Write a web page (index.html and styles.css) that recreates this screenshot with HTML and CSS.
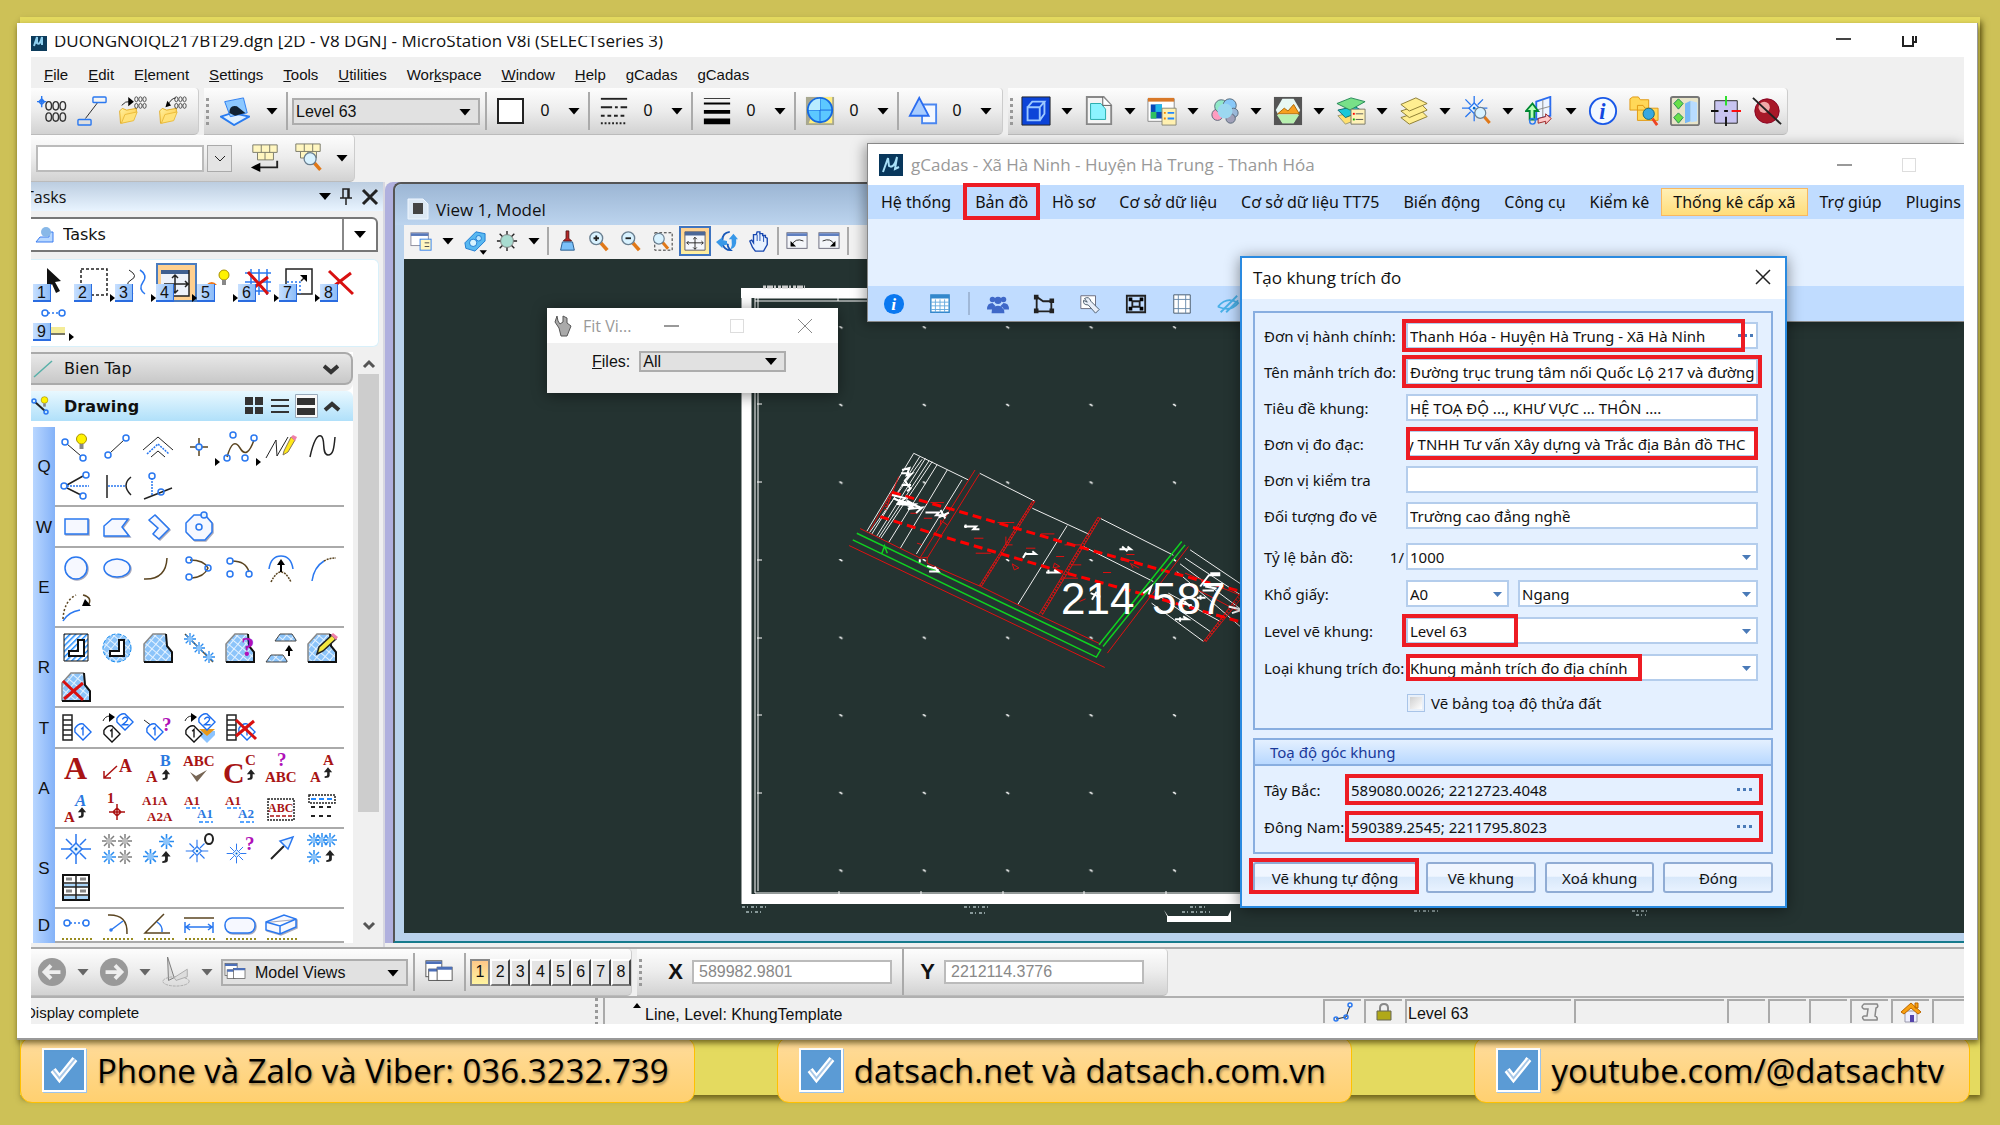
FILE: index.html
```html
<!DOCTYPE html>
<html lang="vi">
<head>
    <meta charset="UTF-8">
    <meta name="viewport" content="width=device-width, initial-scale=1.0">
    <title>gCadas - Tạo khung trích đo</title>
    <link rel="stylesheet" href="styles.css">
</head>
<body>
<svg class="defs" aria-hidden="true">
    <defs>
        <pattern id="hatch" width="6" height="6" patternUnits="userSpaceOnUse" patternTransform="rotate(40)"><rect width="6" height="6" fill="#8cc4fa"/><path d="M0 0H6M0 0V6" stroke="#e4f2ff" stroke-width="2"/></pattern>
        <pattern id="lines" width="4" height="4" patternUnits="userSpaceOnUse" patternTransform="rotate(45)"><rect width="4" height="4" fill="#fff"/><path d="M0 0V4" stroke="#1e8cff" stroke-width="3"/></pattern>
        <pattern id="ticks" x="-66" y="-88" width="83.4" height="77.6" patternUnits="userSpaceOnUse"><path d="M0 0l3 2" stroke="#fff" stroke-width="1.500" transform="translate(1 0)"/></pattern>
        <linearGradient id="fold" x1="0" y1="0" x2="1" y2="1"><stop offset="0" stop-color="#fff2a0"/><stop offset="1" stop-color="#ffc43a"/></linearGradient>
    </defs>
    <symbol id="burst" viewBox="0 0 32 32"><path class="b" d="M16 1v9M16 22v9M1 16h9M22 16h9M6 6l6 6M26 6l-6 6M6 26l6-6M26 26l-6-6"/><path class="b" fill="#bdf" d="M16 10l6 6-6 6-6-6z"/><circle cx="16" cy="16" r="1.500" fill="#06c"/></symbol>
    <symbol id="spark" viewBox="0 0 14 14"><path d="M7 0v14M0 7h14M2 2l10 10M12 2L2 12" stroke="#2a8cf0" stroke-width="1.500"/><circle cx="7" cy="7" r="3" fill="#8cc4fa"/></symbol>
    <symbol id="patch" viewBox="0 0 32 32"><path d="M2 30V12L11 2h13l2 12 4 6v10z" fill="url(#hatch)"/><path d="M2 30V12L11 2h13" fill="none" stroke="#888" stroke-width="1.500"/><path d="M24 2l1 12 5 6v10H2" fill="none" stroke="#111" stroke-width="2"/></symbol>
    <symbol id="hook" viewBox="0 0 12 14"><path d="M6 0l5 6H8v4q0 3-6 3v-2q3 0 3-2V6H1z" fill="#222"/></symbol>
    <symbol id="bulb" viewBox="0 0 12 18"><circle cx="6" cy="6" r="5" fill="#fff200" stroke="#a89000"/><path d="M4 11h4v5H4z" fill="#888"/></symbol>
    <symbol id="folder" viewBox="0 0 32 32"><path d="M3 16l3-3 5 2 11-2v4l-4 9-14 4z" fill="url(#fold)" stroke="#e0a81c"/><path d="M5 30l4-10 14-3-4 10z" fill="#ffe27a" stroke="#e8b838"/></symbol>
    <symbol id="beads" viewBox="0 0 16 16"><g fill="none" stroke="#333"><ellipse cx="3" cy="4" rx="2" ry="3"/><ellipse cx="8" cy="4" rx="2" ry="3"/><ellipse cx="13" cy="4" rx="2" ry="3"/><ellipse cx="3" cy="12" rx="2" ry="3"/><ellipse cx="8" cy="12" rx="2" ry="3"/><ellipse cx="13" cy="12" rx="2" ry="3"/></g></symbol>
    <symbol id="lens" viewBox="0 0 24 24"><path d="M14 14l7 8" stroke="#e07818" stroke-width="4"/><circle cx="9" cy="9" r="7" fill="#d8f2ff" stroke="#6a7f90" stroke-width="1.500"/></symbol>
    <symbol id="tagone" viewBox="0 0 20 20"><path d="M1 6q4-6 9-5l9 9-9 9-9-9z" fill="#fff" stroke="currentColor" stroke-width="1.500"/><path d="M8 7l2-2v9" fill="none" stroke="currentColor" stroke-width="1.500"/></symbol>
    <symbol id="tagtwo" viewBox="0 0 20 20"><path d="M1 6q4-6 9-5l9 9-9 9-9-9z" fill="#fff" stroke="currentColor" stroke-width="1.500"/><path d="M7 7q3-4 6-1 0 3-6 7h7" fill="none" stroke="currentColor" stroke-width="1.500"/></symbol>
    <symbol id="wins" viewBox="0 0 32 28"><rect x="2" y="2" width="17" height="17" fill="#fff" stroke="#555"/><path d="M2 4h17" stroke="#4c6fb8" stroke-width="3"/><rect x="5" y="11" width="11" height="12" fill="#fff" stroke="#555"/><path d="M5 12h11" stroke="#4c6fb8" stroke-width="3"/><rect x="14" y="9" width="16" height="14" fill="#fff" stroke="#555"/><path d="M14 10h16" stroke="#4c6fb8" stroke-width="3"/></symbol>
    <symbol id="minview" viewBox="0 0 24 20"><rect x="1" y="1" width="22" height="17" fill="#f4f6fa" stroke="#667"/><path d="M1 3h22" stroke="#5f7fc0" stroke-width="3"/></symbol>
</svg>

<div class="band">
    <main class="frame">
        <div class="screen">
            <header class="titlebar">
                <svg width="16" height="18" viewBox="0 0 16 18"><path fill="#0d3c5c" d="M0 0h16v18H0z"/><path d="M3 13l3-9v6q3 3 5-6v8" fill="none" stroke="#8fd0f0" stroke-width="2"/></svg>
                <span>DUONGNOIQL217BT29.dgn [2D - V8 DGN] - MicroStation V8i (SELECTseries 3)</span>
                <div class="winbtns"><i class="min"></i><svg width="18" height="18" viewBox="0 0 18 18" class="k"><path d="M2 5h10v11H2zM5 5V2h10v10h-3" stroke-width="2"/></svg></div>
            </header>
            <nav class="menubar">
                <a href="#"><u>F</u>ile</a><a href="#"><u>E</u>dit</a><a href="#">E<u>l</u>ement</a><a href="#"><u>S</u>ettings</a><a href="#"><u>T</u>ools</a><a href="#"><u>U</u>tilities</a><a href="#">Wor<u>k</u>space</a><a href="#"><u>W</u>indow</a><a href="#"><u>H</u>elp</a><a href="#">gCadas</a><a href="#">gCadas</a>
            </nav>

            <div class="toolbars">
                <div class="group files">
                    <svg class="ic" viewBox="0 0 32 32"><path class="b" d="M5 0v12M0 6h10M5 3l3 3-3 3-3-3z"/><use href="#beads" x="8" y="3" width="24" height="27"/></svg>
                    <svg class="ic" viewBox="0 0 32 32"><path class="k" d="M9 24L22 7"/><rect class="b" x="17" y="1" width="14" height="6" rx="1" stroke-width="2"/><rect class="b" x="1" y="25" width="14" height="6" rx="1" stroke-width="2"/></svg>
                    <svg class="ic" viewBox="0 0 32 32"><use href="#folder" width="30" height="32"/><use href="#beads" x="18" y="0" width="14" height="14"/><path class="k" d="M5 10q4-5 9-4"/><path d="M12 1l6 5-6 5z"/></svg>
                    <svg class="ic" viewBox="0 0 32 32"><use href="#folder" width="30" height="32"/><use href="#beads" x="18" y="0" width="14" height="14"/><path class="k" d="M12 10q2-7 8-8"/><path d="M9 12l2-7 4 5z"/></svg>
                </div>
                <div class="group attrs">
                    <i class="grip"></i>
                    <svg class="ic" viewBox="0 0 32 32"><path d="M1 22l12-4 18 4-16 9z" fill="#dff0ff" stroke="#2a7cf0" stroke-width="2"/><path d="M5 6l20-4 4 16-18 4z" fill="#8cc8ff" stroke="#2a7cf0"/><path d="M10 18q0-9 8-7l9 7-11 3z" fill="#123"/></svg>
                    <i class="caret"></i>
                    <div class="cell first">
                        <div class="pick grey"><select aria-label="Level"><option>Level 63</option></select></div>
                    </div>
                    <div class="cell"><i class="swatch"></i><b>0</b><i class="caret"></i></div>
                    <div class="cell"><svg class="ic" viewBox="0 0 32 32"><path class="k" d="M2 3h28" stroke-width="2"/><path class="k" d="M2 12h28" stroke-width="2" stroke-dasharray="12 3 3 3"/><path class="k" d="M2 21h28" stroke-width="2" stroke-dasharray="4 3"/><path class="k" d="M2 29h28" stroke-width="2" stroke-dasharray="2 2"/></svg><b>0</b><i class="caret"></i></div>
                    <div class="cell"><svg class="ic" viewBox="0 0 32 32"><path d="M2 2h28v1H2zM2 7h28v2H2zM2 15h28v4H2zM2 24h28v6H2z"/></svg><b>0</b><i class="caret"></i></div>
                    <div class="cell"><svg class="ic" viewBox="0 0 32 32"><path fill="#a8a890" d="M1 1h30v30H1z"/><path fill="#ffee80" d="M14 1h15v28H4z"/><circle cx="16" cy="15" r="13" fill="#5cc8ff" stroke="#1668e0" stroke-width="2"/><path d="M16 2v26M3 15h26" stroke="#1668e0"/><path d="M16 3a12 12 0 0 0-12 12h12z" fill="#b8ecff"/></svg><b>0</b><i class="caret"></i></div>
                    <div class="cell"><svg class="ic" viewBox="0 0 32 32"><path d="M15 9h15v20H15z" fill="#f4f8ff" stroke="#4a86f0" stroke-width="2"/><path d="M12 2l10 19H2z" fill="#a8ccff" stroke="#2a6cf0" stroke-width="2"/></svg><b>0</b><i class="caret"></i></div>
                </div>
                <div class="group prim">
                    <i class="grip"></i>
                    <svg class="ic" viewBox="0 0 32 32"><path fill="#0c44d8" stroke="#222" d="M1 1h30v30H1z"/><path d="M7 12h13v14H7zM7 12l5-6h13l-5 6M25 6v13l-5 7" fill="none" stroke="#9cc8ff" stroke-width="2"/></svg><i class="caret"></i>
                    <svg class="ic" viewBox="0 0 32 32"><path d="M3 1h18l8 9v20H3z" fill="#f4f4f4" stroke="#888" stroke-width="2"/><path d="M7 8h11l5 6v11H7z" fill="#8cf4ff" stroke="#2aa"/><path d="M20 1v9h9" fill="#fff" stroke="#555"/></svg><i class="caret"></i>
                    <svg class="ic" viewBox="0 0 32 32"><path fill="#fff" stroke="#888" d="M1 3h28v24H1z"/><path fill="#d87828" d="M1 2h28v4H1z"/><path fill="#0848b8" d="M4 9h12v15H4z"/><path fill="#20b8e8" d="M9 9h7v8H9z"/><path fill="#30c060" d="M4 17h6v7H4z"/><path fill="#fff0b0" stroke="#887" d="M16 13h15v18H16z"/><path d="M22 18h7M22 24h7" stroke="#28f" stroke-width="2"/><path d="M18 18h2M18 24h2" stroke="#e80" stroke-width="2"/></svg><i class="caret"></i>
                    <svg class="ic" viewBox="0 0 32 32"><g stroke="#567"><circle cx="8" cy="20" r="6" fill="#ff9cc0"/><circle cx="12" cy="11" r="7" fill="#90e8c8"/><circle cx="21" cy="10" r="7" fill="#88c8f8"/><circle cx="25" cy="18" r="5" fill="#9ab8d8"/><circle cx="22" cy="24" r="5" fill="#a0a0b8"/></g><circle cx="16" cy="16" r="8" fill="#9cd8f0"/></svg><i class="caret"></i>
                    <svg class="ic" viewBox="0 0 32 32"><path fill="#555" d="M1 1h30v30H1z"/><path fill="#e8f8f4" d="M10 3h12l7 12-7 14H10L3 15z"/><path fill="#f8a020" stroke="#a60" d="M5 19l7-6 4 3 6-7 6 10z"/><path fill="#b8f0b0" d="M4 20h24l-6 9H10z"/></svg><i class="caret"></i>
                    <svg class="ic" viewBox="0 0 32 32"><path fill="#ffe070" stroke="#997" d="M2 21l8 9 18-7-8-6z"/><path fill="#18c8d8" stroke="#166" d="M2 15l8 8 18-7-8-5z"/><path fill="#78e088" stroke="#285" d="M1 8l15-6 15 4-16 9z"/><path fill="#fff2b8" stroke="#776" d="M16 14h15v16H16z"/><path d="M21 19h8M21 25h8" stroke="#555"/><path d="M18 19h2" stroke="red" stroke-width="2"/><path d="M18 25h2" stroke="#0a0" stroke-width="2"/></svg><i class="caret"></i>
                    <svg class="ic" viewBox="0 0 32 32"><g fill="#ffee90" stroke="#8a7a30"><path d="M2 23l9 7 19-8-6-6z"/><path d="M2 16l9 7 19-8-6-6z"/><path d="M2 9l9 7 19-8-12-6z"/></g></svg><i class="caret"></i>
                    <svg class="ic" viewBox="0 0 32 32"><use href="#burst" x="-2" y="-2" width="30" height="30"/><use href="#lens" x="12" y="9" width="20" height="23"/></svg><i class="caret"></i>
                    <svg class="ic" viewBox="0 0 32 32"><path fill="#eef4ff" stroke="#2a6cf0" stroke-width="2" d="M12 6l15-5v20l-15 4z"/><path stroke="#888" d="M19 4v20M12 15l15-4"/><path fill="#b8ffb8" stroke="#083" stroke-width="2" d="M8 8l6 8h-4v9H5v-9H1z"/><path fill="#ffc8c8" stroke="#922" d="M14 24l8-2v-3l6 5-6 6v-3l-8 2z"/><circle class="b" cx="8" cy="27" r="3"/></svg><i class="caret"></i>
                    <svg class="ic" viewBox="0 0 32 32"><circle cx="16" cy="16" r="14" fill="#f4faff" stroke="#1858e8" stroke-width="2"/><text x="12" y="24" class="infoi">i</text></svg>
                    <svg class="ic" viewBox="0 0 32 32"><path fill="#ffd858" stroke="#e09810" d="M1 3l3-2h6l2 3h9v11H1zM9 10h6l2 3h14v13H9z"/><circle cx="21" cy="19" r="6" fill="#38a8e0" stroke="#167"/><path d="M25 24l5 7" stroke="#e42" stroke-width="3"/></svg>
                    <svg class="ic" viewBox="0 0 32 32"><rect x="1" y="1" width="30" height="30" rx="2" fill="#e8e4c8" stroke="#777" stroke-width="2"/><path fill="#68e048" stroke="#285" d="M9 3l5 5-5 6-5-6zM9 18l5 5-5 6-5-6z"/><path fill="#78b8f8" d="M16 8l6-3v22l-6 2z"/><path fill="#b8dcff" d="M22 5l7 2v20l-7 1z"/></svg>
                    <svg class="ic" viewBox="0 0 32 32"><path fill="#c8c4f0" stroke="#222" d="M4 5h24v24H4z"/><path d="M16 0v10" stroke="#2d2" stroke-width="2"/><path d="M22 16h10" stroke="red" stroke-width="2"/><path d="M16 22v10M0 16h8M14 16h4" stroke="#111" stroke-width="2"/></svg>
                    <svg class="ic" viewBox="0 0 32 32"><circle cx="16" cy="16" r="13" fill="#a81828" stroke="#802"/><circle cx="13" cy="12" r="6" fill="#f0a8a8"/><path class="k" d="M1 2l30 28" stroke-width="2"/></svg>
                </div>
            </div>
            <div class="toolbars">
                <div class="group keyin">
                    <input type="text" aria-label="Key-in"><button class="drop" aria-label="History"><svg width="12" height="8" viewBox="0 0 12 8" class="k"><path d="M1 1l5 5 5-5"/></svg></button>
                    <svg class="ic" viewBox="0 0 32 32"><path fill="#fff6c0" stroke="#776" d="M3 2h26v8h-4v8H8v-8H3zM12 2v8M21 2v8M16 10v8M8 10h17"/><path class="k" d="M29 19v7H10" stroke-width="2"/><path d="M1 26l10-5v10z"/></svg>
                    <svg class="ic" viewBox="0 0 32 32"><path fill="#fff6c0" stroke="#776" d="M3 1h26v8h-4v7H8V9H3zM12 1v8M21 1v8M16 9v7M8 9h17"/><use href="#lens" x="10" y="7" width="22" height="25"/></svg>
                    <i class="caret"></i>
                </div>
            </div>

            <div class="work">
                <aside class="tasks">
                    <div class="taskhead"><span>Tasks</span><i class="caret"></i>
                        <svg width="12" height="18" viewBox="0 0 12 18" class="k"><path d="M3 1h6v9H3zM8 1v9M0 10h12M6 10v7" stroke-width="1.500"/></svg>
                        <svg width="18" height="18" viewBox="0 0 18 18" class="k"><path d="M2 2l14 14M16 2L2 16" stroke-width="3"/></svg>
                    </div>
                    <div class="taskpick"><svg width="20" height="18" viewBox="0 0 20 18"><path d="M1 16l4-5h9V6h4v10z" fill="#b8d8ff" stroke="#3a7cf0"/><circle cx="11" cy="6" r="5" fill="#88b8e8"/></svg><select aria-label="Task"><option>Tasks</option></select><i class="caret"></i></div>
                    <div class="mainbox">
                        <button><svg viewBox="0 0 32 32"><path d="M13 0l14 13-6 1 5 9-4 2-4-9-5 5z" fill="#111"/></svg><kbd>1</kbd></button>
                        <button class="more"><svg viewBox="0 0 32 32"><path class="k" d="M6 1h26v26H6z" stroke-dasharray="3 2" stroke-width="1.500"/></svg><kbd>2</kbd></button>
                        <button class="more"><svg viewBox="0 0 32 32"><path class="k" d="M13 2q10 6 2 10t2 14"/><path class="b" d="M24 2q8 5 3 12t2 12" stroke-width="1.500"/></svg><kbd>3</kbd></button>
                        <button class="more on"><svg viewBox="0 0 32 32"><path fill="#eef2fa" d="M4 2h28v26H4z"/><path fill="#3f5f90" d="M4 2h28v4H4z"/><path class="k" d="M18 7v18M7 16h24M15 10l3-3 3 3M28 13l3 3-3 3M15 22l3 3 3-3M32 2v26H4" stroke-width="1.500"/></svg><kbd>4</kbd></button>
                        <button class="more"><svg viewBox="0 0 32 32"><path fill="#f07818" d="M8 17q6-6 11 0z"/><use href="#bulb" x="20" y="0" width="12" height="20"/></svg><kbd>5</kbd></button>
                        <button class="more"><svg viewBox="0 0 32 32"><path class="b" d="M12 1v26M20 1v26M28 1v26M6 5h26M6 14h26M6 23h26" stroke-width="1.500"/><path class="r" d="M9 4l20 22M29 9L9 24" stroke-width="3"/></svg><kbd>6</kbd></button>
                        <button class="more"><svg viewBox="0 0 32 32"><path class="k" d="M6 1h26v25H6zM21 13l5-5" stroke-width="1.500"/><path d="M20 7h7v7z"/><path class="b" d="M7 14h13v12" stroke-dasharray="2 2"/></svg><kbd>7</kbd></button>
                        <button><svg viewBox="0 0 32 32"><path class="r" d="M8 3l24 23M30 5L13 18" stroke-width="3"/></svg><kbd>8</kbd></button>
                        <button class="more"><svg viewBox="0 0 32 32"><circle class="b" cx="11" cy="6" r="3"/><circle class="b" cx="28" cy="6" r="3"/><path class="b" d="M14 6h12" stroke-dasharray="2 2"/><path d="M17 20h14v6H17z" fill="#f4ec98"/><path d="M17 27h14" stroke="#776" stroke-width="2"/></svg><kbd>9</kbd></button>
                    </div>
                    <div class="scroller">
                        <div class="list">
                            <div class="sec closed"><svg width="22" height="20" viewBox="0 0 22 20"><path d="M3 18L21 2" stroke="#58b0a8" stroke-width="1.500"/></svg><span>Bien Tap</span><svg width="16" height="12" viewBox="0 0 16 12"><path d="M1 3l7 6 7-6" fill="none" stroke="#333" stroke-width="4"/></svg></div>
                            <div class="sec open"><svg width="22" height="20" viewBox="0 0 22 20"><path class="k" d="M4 6l10 9" stroke-width="2"/><circle class="b" cx="3" cy="5" r="2"/><circle class="b" cx="15" cy="16" r="2"/><use href="#bulb" x="9" y="0" width="9" height="12"/></svg><span>Drawing</span>
                                <svg width="96" height="24" viewBox="0 0 96 24" fill="#333"><path d="M0 3h8v8H0zM10 3h8v8h-8zM0 13h8v7H0zM10 13h8v7h-8zM26 5h18v2H26zM26 11h18v2H26zM26 17h18v2H26z"/><path fill="#f8f8f8" stroke="#9ab" d="M50.500.5h22v23h-22z"/><path d="M52 4h18v7H52zM52 14h18v7H52z"/><path d="M80 16l7-6 7 6" fill="none" stroke="#333" stroke-width="4"/></svg></div>
                            <div class="row"><kbd>Q</kbd><div class="icons">
                                <svg viewBox="0 0 32 32"><path class="k" d="M7 13l14 12"/><circle class="b" cx="5" cy="11" r="3"/><circle class="b" cx="23" cy="27" r="3"/><use href="#bulb" x="15" y="2" width="13" height="18"/></svg>
                                <svg viewBox="0 0 32 32"><path class="k" d="M9 22L23 9"/><circle class="b" cx="7" cy="24" r="3"/><circle class="b" cx="25" cy="7" r="3"/></svg>
                                <svg viewBox="0 0 32 32"><path class="k" d="M1 19L16 6l15 13M9 26l7-6 7 6"/><path class="b" d="M5 23l11-10 11 10" stroke-dasharray="2 1"/></svg>
                                <svg viewBox="0 0 32 32"><path class="n" d="M16 7v18M7 16h18"/><circle class="b" fill="#fff" cx="16" cy="16" r="3"/><path d="M32 27l5 4-5 4z"/></svg>
                                <svg viewBox="0 0 32 32"><path class="n" d="M3 26Q9 5 16 17t14-8"/><circle class="b" cx="3" cy="27" r="3"/><circle class="b" cx="9" cy="4" r="3"/><circle class="b" cx="21" cy="27" r="3"/><circle class="b" cx="30" cy="7" r="3"/><path d="M32 27l5 4-5 4z"/></svg>
                                <svg viewBox="0 0 32 32"><path class="k" d="M1 27L11 9l1 16L23 6"/><path d="M19 20l7-14 4 3-7 12-5 3z" fill="#ffe818" stroke="#875"/><path d="M26 6l2-2 4 2-2 4z" fill="#f080a8"/></svg>
                                <svg viewBox="0 0 32 32"><path class="k" d="M4 26Q9 3 15 5c5 2 0 18 7 19 5 0 6-6 7-18" stroke-width="1.500"/></svg>
                                <svg viewBox="0 0 32 32"><path class="k" d="M7 15L23 6M7 18l14 7" stroke-width="1.500"/><path class="b" d="M7 16h22" stroke-dasharray="2 1"/><circle class="b" cx="4" cy="16" r="3"/><circle class="b" cx="26" cy="5" r="3"/><circle class="b" cx="23" cy="26" r="3"/></svg>
                                <svg viewBox="0 0 32 32"><path class="k" d="M6 5v23M30 7q-10 8 0 18" stroke-width="1.500"/><path class="b" d="M7 16h18" stroke-dasharray="2 1"/></svg>
                                <svg viewBox="0 0 32 32"><path class="k" d="M2 29l28-11" stroke-width="1.500"/><path class="b" d="M10 8v17" stroke-dasharray="2 1"/><circle class="b" cx="10" cy="6" r="3"/><circle class="b" cx="19" cy="22" r="3"/></svg>
                            </div></div>
                            <div class="row"><kbd>W</kbd><div class="icons">
                                <svg viewBox="0 0 32 32"><path class="b s" d="M5 8h23v15H5z"/></svg>
                                <svg viewBox="0 0 32 32"><path class="b s" d="M3 25V15l8-7h16l-6 8 7 9z"/></svg>
                                <svg viewBox="0 0 32 32"><path class="b s" d="M7 9l6-5 14 14-10 10-6-5 5-6z"/></svg>
                                <svg viewBox="0 0 32 32"><path class="b s" d="M11 4h11l7 8v9l-7 8H11l-8-8v-9z"/><circle class="b" cx="16" cy="16" r="3"/><circle class="b" fill="#fff" cx="21" cy="4" r="3"/></svg>
                            </div></div>
                            <div class="row"><kbd>E</kbd><div class="icons">
                                <svg viewBox="0 0 32 32"><circle class="b s" cx="16" cy="16" r="11"/></svg>
                                <svg viewBox="0 0 32 32"><ellipse class="b s" cx="16" cy="16" rx="13" ry="9"/></svg>
                                <svg viewBox="0 0 32 32"><path class="n" d="M2 27Q24 28 25 6"/></svg>
                                <svg viewBox="0 0 32 32"><path class="n" d="M7 8q14 0 18 8-4 9-16 10"/><circle class="b" cx="6" cy="8" r="3"/><circle class="b" cx="25" cy="16" r="3"/><circle class="b" cx="6" cy="25" r="3"/></svg>
                                <svg viewBox="0 0 32 32"><path class="n" d="M8 9q14 0 17 11"/><circle class="b" cx="6" cy="9" r="3"/><circle class="b" cx="25" cy="22" r="3"/><circle class="b" cx="6" cy="22" r="3"/></svg>
                                <svg viewBox="0 0 32 32"><path class="b" d="M4 17Q6 4 16 4t12 13" stroke-width="1.500"/><path class="n" d="M6 30q10-20 20 0" stroke-dasharray="2 1"/><path d="M16 7l4 6h-3v7h-2v-7h-3z"/></svg>
                                <svg viewBox="0 0 32 32"><path class="b" d="M6 29q2-14 12-20" stroke-width="1.500"/><path class="n" d="M18 9q5-3 12-3" stroke-dasharray="2 1"/></svg>
                                <svg viewBox="0 0 32 32"><path class="n" d="M3 28Q4 10 16 4" stroke-dasharray="2 2"/><path class="b" d="M3 30q5-9 17-11" stroke-width="1.500"/><path class="n" d="M23 4q9 2 6 9" stroke-width="2"/><path d="M22 15l3-7 6 7z"/></svg>
                            </div></div>
                            <div class="row"><kbd>R</kbd><div class="icons">
                                <svg viewBox="0 0 32 32"><path fill="url(#lines)" stroke="#111" d="M4 2h24v27H4z"/><path fill="#fff" stroke="#111" stroke-width="2" d="M18 8h6v16H9v-5h9z"/></svg>
                                <svg viewBox="0 0 32 32"><circle cx="16" cy="16" r="14" fill="url(#hatch)" stroke="#18e" stroke-dasharray="4 2"/><path fill="#fff" stroke="#111" stroke-width="2" d="M18 8h5v16H9v-5h9z"/></svg>
                                <svg viewBox="0 0 32 32"><use href="#patch"/></svg>
                                <svg viewBox="0 0 32 32"><path class="n" d="M2 2l28 28"/><use href="#spark" x="1" y="1" width="12" height="12"/><use href="#spark" x="10" y="10" width="12" height="12"/><use href="#spark" x="20" y="19" width="12" height="12"/></svg>
                                <svg viewBox="0 0 32 32"><use href="#patch"/><text x="17" y="24" class="q big">?</text></svg>
                                <svg viewBox="0 0 32 32"><path fill="url(#hatch)" stroke="#444" d="M10 9l5-7h12l4 6v1zM1 30l5-7h12l4 6v1z"/><path d="M24 13l4 6h-3v5h-2v-5h-3z"/></svg>
                                <svg viewBox="0 0 32 32"><use href="#patch"/><path d="M11 22l2-7L26 3l4 4-13 12z" fill="#f4e840" stroke="#222" stroke-width="1.500"/><path d="M25 3l2-2 5 4-2 3z" fill="#f080a8"/></svg>
                                <svg viewBox="0 0 32 32"><use href="#patch"/><path class="r" d="M3 10l20 19M23 12L4 28" stroke-width="3"/></svg>
                            </div></div>
                            <div class="row"><kbd>T</kbd><div class="icons">
                                <svg viewBox="0 0 32 32" class="cb"><path class="k" d="M3 3h9v25H3zM3 8h9M3 13h9M3 18h9M3 23h9" stroke-width="1.500"/><use href="#tagone" x="14" y="11" width="18" height="18"/></svg>
                                <svg viewBox="0 0 32 32"><use href="#tagone" x="2" y="13" width="18" height="18"/><g class="cb"><use href="#tagtwo" x="15" y="1" width="18" height="18"/></g><path class="k" d="M2 9q2-5 7-5"/><path d="M8 1l6 4-6 5z"/></svg>
                                <svg viewBox="0 0 32 32" class="cb"><path class="k" d="M2 8l8 6"/><use href="#tagone" x="4" y="11" width="18" height="18"/><text x="20" y="19" class="q">?</text></svg>
                                <svg viewBox="0 0 32 32"><path d="M16 23l8 8 8-8v-4H16z" fill="#8cc4ff"/><path d="M16 17l8 7 8-7z" fill="#e89818"/><use href="#tagone" x="2" y="13" width="18" height="18"/><g class="cb"><use href="#tagtwo" x="15" y="1" width="18" height="18"/></g><path class="k" d="M2 9q2-5 7-5"/><path d="M8 1l6 4-6 5z"/></svg>
                                <svg viewBox="0 0 32 32" class="cb"><path class="k" d="M3 3h9v25H3zM3 8h9M3 13h9M3 18h9M3 23h9" stroke-width="1.500"/><use href="#tagone" x="14" y="11" width="18" height="18"/><path class="r" d="M12 8l20 19M30 9L12 24" stroke-width="3"/></svg>
                            </div></div>
                            <div class="row"><kbd>A</kbd><div class="icons serif">
                                <svg viewBox="0 0 32 32"><text x="4" y="26" font-size="32">A</text></svg>
                                <svg viewBox="0 0 32 32"><path d="M16 13L3 25M3 18v7h7" fill="none" stroke="#a11" stroke-width="1.500"/><text x="18" y="19" font-size="18">A</text></svg>
                                <svg viewBox="0 0 32 32"><text x="4" y="29" font-size="16">A</text><text x="18" y="13" font-size="16" class="fb">B</text><use href="#hook" x="19" y="16" width="10" height="12"/></svg>
                                <svg viewBox="0 0 32 32"><text x="0" y="13" font-size="15">ABC</text><path d="M7 19l6 4 11-6-10 12z" fill="#765"/></svg>
                                <svg viewBox="0 0 32 32"><text x="-1" y="30" font-size="30">C</text><text x="21" y="12" font-size="15">C</text><use href="#hook" x="22" y="16" width="10" height="12"/></svg>
                                <svg viewBox="0 0 32 32"><text x="0" y="29" font-size="15">ABC</text><text x="12" y="13" font-size="17" class="q">?</text></svg>
                                <svg viewBox="0 0 32 32"><text x="4" y="29" font-size="15">A</text><text x="17" y="12" font-size="15">A</text><use href="#hook" x="17" y="14" width="10" height="12"/></svg>
                                <svg viewBox="0 0 32 32"><text x="4" y="30" font-size="15">A</text><text x="15" y="14" font-size="17" font-style="italic" class="fb">A</text><use href="#hook" x="17" y="15" width="10" height="12"/></svg>
                                <svg viewBox="0 0 32 32"><text x="6" y="11" font-size="15">1</text><path d="M16 12v16M8 20h16M16 16l4 4-4 4-4-4z" fill="#fff" stroke="#a11" stroke-width="1.500"/></svg>
                                <svg viewBox="0 0 32 32"><text x="0" y="13" font-size="13">A1A</text><text x="5" y="29" font-size="13">A2A</text></svg>
                                <svg viewBox="0 0 32 32"><text x="1" y="13" font-size="13">A1</text><text x="14" y="26" font-size="13" class="fb">A1</text><path d="M3 16h14M16 30h14" stroke="#28f" stroke-dasharray="4 2" stroke-width="1.500"/></svg>
                                <svg viewBox="0 0 32 32"><text x="1" y="13" font-size="13">A1</text><text x="14" y="26" font-size="13" class="fb">A2</text><path d="M3 16h14M16 30h14" stroke="#28f" stroke-dasharray="4 2" stroke-width="1.500"/></svg>
                                <svg viewBox="0 0 32 32"><path class="k" d="M3 7h26v21H3z" stroke-dasharray="2 1" stroke-width="1.500"/><text x="3" y="20" font-size="12">ABC</text><path d="M5 24h22" stroke="#a11" stroke-dasharray="4 2" stroke-width="1.500"/></svg>
                                <svg viewBox="0 0 32 32"><path class="k" d="M3 3h26v8H3z" stroke-dasharray="2 1" stroke-width="1.500"/><path d="M5 7h22" stroke="#28f" stroke-width="2" stroke-dasharray="5 3"/><path class="k" d="M5 15h22M5 24h22" stroke-width="2" stroke-dasharray="4 4"/></svg>
                            </div></div>
                            <div class="row"><kbd>S</kbd><div class="icons">
                                <svg viewBox="0 0 32 32"><use href="#burst"/></svg>
                                <svg viewBox="0 0 32 32"><g class="faded"><use href="#spark" x="1" y="1" width="14" height="14"/><use href="#spark" x="17" y="1" width="14" height="14"/><use href="#spark" x="17" y="17" width="14" height="14"/></g><use href="#spark" x="1" y="17" width="14" height="14"/></svg>
                                <svg viewBox="0 0 32 32"><use href="#spark" x="17" y="1" width="15" height="15"/><use href="#spark" x="1" y="16" width="15" height="15"/><use href="#hook" x="18" y="18" width="12" height="13"/></svg>
                                <svg viewBox="0 0 32 32"><use href="#burst" x="2" y="6" width="24" height="24"/><ellipse class="k" cx="26" cy="6" rx="4" ry="5" stroke-width="2"/></svg>
                                <svg viewBox="0 0 32 32"><use href="#burst" x="2" y="10" width="21" height="21"/><text x="21" y="17" class="q">?</text></svg>
                                <svg viewBox="0 0 32 32"><path class="k" d="M6 26L19 13" stroke-width="2"/><path class="b" fill="#cfe4ff" d="M28 4l-13 4 8 8z" stroke-width="2"/></svg>
                                <svg viewBox="0 0 32 32"><use href="#spark" x="1" y="0" width="14" height="14"/><use href="#spark" x="9" y="0" width="14" height="14"/><use href="#spark" x="17" y="0" width="14" height="14"/><use href="#spark" x="1" y="17" width="14" height="14"/><use href="#hook" x="18" y="17" width="12" height="13"/></svg>
                                <svg viewBox="0 0 32 32"><path fill="#fff" stroke="#111" stroke-width="2" d="M3 3h26v25H3z"/><path fill="#a8d4f8" d="M4 12h24v3H4zM4 24h24v3H4z"/><path class="k" d="M16 3v25M3 11h26M3 15h26M3 23h26" stroke-width="1.500"/><path d="M6 7h6M20 7h6M6 19h6M20 19h6" stroke="#888" stroke-width="3"/></svg>
                            </div></div>
                            <div class="row cut"><kbd>D</kbd><div class="icons">
                                <svg viewBox="0 0 32 32"><circle class="b" cx="7" cy="10" r="3"/><circle class="b" cx="26" cy="10" r="3"/><path class="b" d="M10 10h13" stroke-dasharray="2 2"/><path class="y" d="M2 26h30"/></svg>
                                <svg viewBox="0 0 32 32"><path class="n" d="M7 2q20-1 19 19" stroke-width="2"/><path class="b" d="M10 17L22 8" stroke-width="1.500"/><circle class="b" cx="10" cy="17" r="1"/><path class="y" d="M2 26h30"/></svg>
                                <svg viewBox="0 0 32 32"><path class="n" d="M22 1L3 20h25" stroke-width="1.500"/><path class="b" d="M15 9q6 4 5 10"/><path class="y" d="M2 26h30"/></svg>
                                <svg viewBox="0 0 32 32"><path class="n" d="M1 5h30" stroke-width="2"/><path class="b" d="M2 9v11M30 9v11M3 14h26M7 11l-4 3 4 3M25 11l4 3-4 3"/><path class="y" d="M2 26h30"/></svg>
                                <svg viewBox="0 0 32 32"><rect class="b s" x="1" y="5" width="30" height="15" rx="7"/><path class="y" d="M2 26h30"/></svg>
                                <svg viewBox="0 0 32 32"><path class="b s" d="M1 9l18-7 12 4v8l-16 7-14-4zM1 9l14 4 16-7M15 13v8"/><path class="y" d="M2 26h30"/></svg>
                            </div></div>
                        </div>
                        <div class="scrollbar"><svg width="14" height="10" viewBox="0 0 14 10"><path d="M2 8l5-5 5 5" fill="none" stroke="#555" stroke-width="3"/></svg><i></i><svg width="14" height="10" viewBox="0 0 14 10"><path d="M2 2l5 5 5-5" fill="none" stroke="#555" stroke-width="3"/></svg></div>
                    </div>
                </aside>

                <section class="view">
                    <div class="viewtitle"><svg width="22" height="22" viewBox="0 0 22 22"><path d="M1 1h15l5 5v15H1z" fill="#dce8f4" stroke="#eef6ff"/><path d="M6 5h10v11H6z" fill="#444"/></svg><span>View 1, Model</span></div>
                    <div class="viewtools">
                        <svg viewBox="0 0 24 24"><rect x="1" y="3" width="19" height="14" fill="#fff" stroke="#889"/><path d="M1 5h19" stroke="#5878b8" stroke-width="3"/><rect x="11" y="10" width="12" height="12" fill="#fff6c0" stroke="#2a7cf0"/><path d="M16 14h5M16 18h5" stroke="#444"/></svg><i class="caret wide"></i>
                        <svg viewBox="0 0 24 24" class="spill"><path d="M1 14L13 2l10 2v8L12 23 2 20z" fill="#58b8f0" stroke="#1878d0"/><circle cx="10" cy="14" r="4" fill="#d8f4ff" stroke="#1878d0"/><circle cx="16" cy="9" r="3" fill="#b8e4ff" stroke="#1878d0"/><path d="M17 22h8l-4 5z"/></svg>
                        <svg viewBox="0 0 24 24"><path class="k" d="M12 1v22M1 12h22M4 4l16 16M20 4L4 20" stroke-width="1.500"/><circle cx="12" cy="12" r="7" fill="#a8dcd0" stroke="#777"/></svg><i class="caret wide"></i><i class="sep"></i>
                        <svg viewBox="0 0 24 24"><path fill="#b82828" stroke="#511" d="M11 1h3v8l3 3H8l3-3z"/><path fill="#7ac0f8" stroke="#258" d="M7 13h11l2 9H5z"/></svg>
                        <svg viewBox="0 0 24 24"><use href="#lens"/><path class="k" d="M6 9h6M9 6v6" stroke-width="2"/></svg>
                        <svg viewBox="0 0 24 24"><use href="#lens"/><path class="k" d="M6 9h6" stroke-width="2"/></svg>
                        <svg viewBox="0 0 24 24"><path class="k" d="M3 3h19v19H3z" stroke-dasharray="3 2"/><use href="#lens" width="20" height="24"/></svg>
                        <button class="fit" aria-label="Fit View"><svg viewBox="0 0 24 24"><path fill="#f6f8fc" stroke="#556" d="M1 2h22v20H1z"/><path fill="#4c6898" d="M1 2h22v4H1z"/><path class="k" d="M12 8v13M3 14h18M10 10l2-2 2 2M10 19l2 2 2-2M5 12l-2 2 2 2M19 12l2 2-2 2"/></svg></button>
                        <svg viewBox="0 0 24 24"><path d="M15 2Q7 3 7 11M7 15q2 7 9 7-4-4-3-7" fill="none" stroke="#1858b8" stroke-width="2"/><path d="M0 13l7-5v3l5 1v4l-5 1v3zM14 10l5-6 5 6h-2q1 9-6 11 2-5 1-11z" fill="#3898e8"/></svg>
                        <svg viewBox="0 0 24 24"><path d="M5 19L2 12l2-1 2 3V5h3l1-3h3v2h3v2h3v2l2 1v7l-4 7H8z" fill="#e8f2ff" stroke="#1848b0" stroke-width="1.500"/><path d="M10 5v7M13 4v8M17 6v7" stroke="#1848b0"/></svg><i class="sep"></i>
                        <svg viewBox="0 0 24 24"><use href="#minview" x="0" y="2" width="24" height="20"/><path class="k" d="M6 17q4-9 13-5"/><path d="M5 12v6h6z"/></svg>
                        <svg viewBox="0 0 24 24"><use href="#minview" x="0" y="2" width="24" height="20"/><path class="k" d="M5 12q9-4 13 4"/><path d="M19 12v6h-6z"/></svg><i class="sep"></i>
                    </div>
                    <div class="canvas">
                        <svg class="map" width="1560" height="672" viewBox="0 0 1560 672">
                            <path d="M342.500 34V640H1290M337 34H1290" fill="none" stroke="#fff" stroke-width="10"/>
                            <path d="M351 39V634H1290M354 36V632M351 39H1290M351 42H1290M353 67h5M353 145h5M353 223h5M353 301h5M353 379h5M353 456h5M353 534h5" fill="none" stroke="#fff"/>
                            <rect x="400" y="50" width="440" height="575" fill="url(#ticks)"/>
                            <path d="M435 632v5M517 632v5M599 632v5M680 632v5M762 632v5M434 37v5" stroke="#fff"/>
                            <path d="M359 28h42" stroke="#ccc" stroke-width="3" stroke-dasharray="3 1 6 1 2 2"/>
                            <path d="M338 648h24M342 653h18M560 648h24M566 654h18M786 648h18M778 653h28M1010 652h24M1228 652h16M1232 656h10" stroke="#899" stroke-width="2" stroke-dasharray="3 2 1 3"/>
                            <path d="M760 651l4 6h60l3-6v12h-64v-6z" fill="#fff"/>
                            <g transform="translate(426 171) scale(.335 .333)" class="parcel">
                                <path class="w" d="M110 304L250 70L413 150M447 130L610 213M604 235L773 313M808 266L1025 376M757 350L965 455M268 80L125 312M285 85L140 318M305 95L152 325M320 104L175 338M350 120L210 355M394 150L258 372M708 287L560 525M1075 360L1245 475M1060 385L1245 508M1045 402L1245 552M1035 425L1245 608M960 520L1115 635M985 500L1135 605M1010 490L1165 575M275 88L118 308M296 92L146 322"/>
                                <path class="rd" d="M57 347L820 713M90 296L270 385M290 382V400L450 470L628 558L808 643M433 120L268 385M446 132L290 385M612 213L452 470M604 215L446 468M808 263L634 555M800 262L625 552M1070 350L828 670M1225 490L1115 636M1232 500L1122 636M185 185L120 300M205 140L170 230M1060 430l175 70M1060 460l170 90M270 385l20-3"/>
                                <path class="rh" d="M608 214L449 469M804 263L630 554M1225 495L1118 636M180 195L165 240"/>
                                <path class="dash" d="M185 187L370 240L740 350L960 412L1245 490M150 260L330 318L700 428L960 500L1245 582"/>
                                <path class="rd" d="M300 218h40M350 285l-20-14v14M430 325h28M435 370h45M550 420l-6-18 20 12zM585 355h28M675 380h24M700 345h50M720 405h30M815 428h24M885 374h24M905 415l-8-14 26 14M500 278h50M630 312h40M240 250h20M280 265h25M525 320v25h20M670 400l16 10-20 4zM870 392h40M690 445h50M260 340l14 4M745 515l18-8"/>
                                <path class="gr" d="M80 310L808 660L795 682L68 330M270 402L808 660M803 645L1050 335M815 650L1060 345M155 370l8-22 8 22"/>
                                <path class="blob" d="M215 120l22-6-8 22 14-4-20 20M212 130h24M222 150l18 26-10 8M214 165h28M185 195l40 10-20 14 50 4-22 14 42-4-18 16M205 210l64 22M190 205l60 30M200 222l50 4M230 212l40 22M285 248h40l-8 8h30M330 240l14 26M325 262l30-14M400 290h36l-8 8h18M405 284v10M580 372h34l-10-8M576 384l10-16M645 428h36l-12-8M652 420v12M864 358h34l-10-8M872 350l16 14M778 490l20 8M782 510l14-24M795 500h12M935 490l24-20-8 24M1105 470l26-34h34M1112 482h34M1120 470l34 6M1135 430h30M1030 568h38l-14-8M1045 562v14M1050 520l30 6M1058 514l16 16M1190 530l40 10M1200 550l30-10M290 408l34 12M296 425h28l-12-14M1095 504h26M1106 496v14M268 388v10"/>
                            </g>
                            <text x="657" y="355" class="area">214<tspan x="748">587</tspan></text>
                        </svg>

                        <div class="win fitwin">
                            <div class="wintitle"><svg width="18" height="22" viewBox="0 0 18 22"><path d="M3 1l-2 6 4 6 2 8h6l2-5 2-5-4-3V3L9 1v6L6 9 4 6z" fill="#aaa" stroke="#555"/></svg><span>Fit Vi...</span><i class="min"></i><i class="max"></i><svg width="16" height="16" viewBox="0 0 16 16"><path d="M1 1l14 14M15 1L1 15" stroke="#888"/></svg></div>
                            <div class="fitbody"><label for="files"><u>F</u>iles:</label><div class="pick grey"><select id="files"><option>All</option></select></div></div>
                        </div>
                    </div>
                </section>
            </div>

            <div class="toolbars bottom">
                <div class="group nav">
                    <svg class="ic" viewBox="0 0 32 32"><circle cx="16" cy="16" r="15" fill="#999"/><path d="M25 16H9M15 9l-7 7 7 7" fill="none" stroke="#eee" stroke-width="4"/></svg><i class="caret dim"></i>
                    <svg class="ic" viewBox="0 0 32 32"><circle cx="16" cy="16" r="15" fill="#999"/><path d="M7 16h16M17 9l7 7-7 7" fill="none" stroke="#eee" stroke-width="4"/></svg><i class="caret dim"></i>
                    <svg class="ic" viewBox="0 0 32 32"><path d="M7 0l7 22-6 3z" fill="#ddd" stroke="#777"/><ellipse cx="16" cy="26" rx="14" ry="5" fill="none" stroke="#aaa" stroke-dasharray="3 1"/><path d="M14 22l14-9v8l-12 4z" fill="#ddd" stroke="#aaa"/></svg><i class="caret dim"></i>
                    <div class="pick grey models"><svg width="24" height="20" viewBox="0 0 32 28"><use href="#wins" width="32" height="28"/></svg><select aria-label="Models"><option>Model Views</option></select></div>
                    <i class="sep"></i><svg class="ic" viewBox="0 0 32 28"><use href="#wins" width="32" height="28"/></svg><i class="sep"></i>
                    <div class="views"><button class="on">1</button><button>2</button><button>3</button><button>4</button><button>5</button><button>6</button><button>7</button><button>8</button></div>
                </div>
                <div class="group coords">
                    <i class="grip"></i><label for="cx">X</label><input id="cx" type="text" value="589982.9801">
                    <i class="sep"></i><label for="cy" class="short">Y</label><input id="cy" type="text" value="2212114.3776">
                </div>
            </div>
            <footer class="status">
                <span class="ready">Display complete</span><i class="grip"></i>
                <span class="msg"><i></i>Line, Level: KhungTemplate</span>
                <span class="st"><svg width="20" height="20" viewBox="0 0 20 20"><path class="k" d="M3 17l10-2 4-11"/><circle class="b" cx="3" cy="17" r="2"/><circle class="b" cx="13" cy="15" r="2"/><circle class="b" cx="17" cy="3" r="2"/></svg></span>
                <span class="st"><svg width="18" height="18" viewBox="0 0 18 18"><path d="M5 9V5q0-4 4-4t4 4v4" fill="none" stroke="#888" stroke-width="2"/><path fill="#b0a818" stroke="#665" d="M2 8h14v9H2z"/></svg></span>
                <span class="st level">Level 63</span><span class="st long"></span><span class="st"></span><span class="st"></span><span class="st"></span>
                <span class="st"><svg width="20" height="20" viewBox="0 0 20 20"><path d="M4 2h13q2 3-1 4l-1 8q3 1 2 4H4q-3-3 0-4h3L8 7H4Q0 5 4 2z" fill="#eee" stroke="#888" stroke-width="1.500"/></svg></span>
                <span class="st"><svg width="22" height="22" viewBox="0 0 22 22"><path fill="#eef" stroke="#99a" d="M5 10h12v11H5z"/><path fill="#f8a010" stroke="#b60" d="M11 2l10 9-3 2-7-6-7 6-3-2zM15 2h3v5h-3z"/><path fill="#54a" d="M10 14h4v7h-4z"/></svg></span>
                <span class="st last"></span>
            </footer>

            <div class="win gcadas">
                <div class="wintitle"><svg width="24" height="22" viewBox="0 0 24 22"><path fill="#08375c" d="M0 0h24v22H0z"/><path d="M4 18L9 4l1 8q5 3 8-9l-2 12 4-2" fill="none" stroke="#a8e0f8" stroke-width="2"/></svg><span>gCadas - Xã Hà Ninh - Huyện Hà Trung - Thanh Hóa</span><i class="min"></i><i class="max"></i></div>
                <nav class="gmenu">
                    <a href="#">Hệ thống</a><a href="#" class="mark">Bản đồ</a><a href="#">Hồ sơ</a><a href="#">Cơ sở dữ liệu</a><a href="#">Cơ sở dữ liệu TT75</a><a href="#">Biến động</a><a href="#">Công cụ</a><a href="#">Kiểm kê</a><a href="#" class="hot">Thống kê cấp xã</a><a href="#">Trợ giúp</a><a href="#">Plugins</a>
                </nav>
                <div class="gbody"></div>
                <div class="gicons">
                    <svg viewBox="0 0 24 24"><circle cx="12" cy="12" r="11" fill="#0a78f0"/><text x="9" y="19" class="infow">i</text></svg>
                    <svg viewBox="0 0 24 24"><path fill="#fff" stroke="#38c" stroke-width="1.500" d="M2 2h20v19H2z"/><path stroke="#6ad" d="M2 10h20M2 14h20M2 18h20M7 7v14M12 7v14M17 7v14"/><path fill="#38c" d="M2 2h20v4H2z"/></svg><i class="sep"></i>
                    <svg viewBox="0 0 24 24" fill="#3f68c8"><circle cx="6" cy="7" r="3"/><circle cx="18" cy="7" r="3"/><circle cx="12" cy="8" r="4"/><path d="M0 18q0-7 6-7l3 3-3 4zM24 18q0-7-6-7l-3 3 3 4zM5 22q0-8 7-8t7 8z"/></svg>
                    <svg viewBox="0 0 24 24"><path class="k" d="M4 4v16h16V9h-9L4 4" stroke-width="2"/><path fill="#222" d="M1 2h5v5H1zM18 6h5v5h-5zM1 17h5v5H1zM18 17h5v5h-5z"/></svg>
                    <svg viewBox="0 0 24 24"><path d="M2 3h16v14H2z" fill="#fff" stroke="#667"/><path d="M6 6q5-3 7 3l9 9-4 4-8-9q-6 0-5-5l4 2z" fill="#e8eef8" stroke="#456"/></svg>
                    <svg viewBox="0 0 24 24"><path class="k" d="M2 3h20v18H2z" stroke-width="2"/><path class="k" d="M8 9h8v6H8z" stroke-width="2"/><path d="M4 5h4v4H4zM16 5h4v4h-4zM4 15h4v4H4zM16 15h4v4h-4z"/></svg>
                    <svg viewBox="0 0 24 24"><path d="M3 2h18v20H3z" fill="#fff" stroke="#456"/><path d="M3 7h18M3 17h18M8 2v20M16 2v20" stroke="#68a"/></svg>
                    <svg viewBox="0 0 24 24"><path d="M1 15q10-12 22-4-8 10-22 4M4 21L22 3M10 21L23 8" fill="none" stroke="#48b0e8" stroke-width="2"/></svg>
                </div>
            </div>

            <form class="win dialog">
                <div class="dlgtitle"><span>Tạo khung trích đo</span><svg width="18" height="18" viewBox="0 0 18 18"><path d="M2 2l14 14M16 2L2 16" stroke="#222" stroke-width="1.500"/></svg></div>
                <div class="panel">
                    <div class="fields">
                        <label for="f1">Đơn vị hành chính:</label><div class="field mark m1"><input id="f1" value="Thanh Hóa - Huyện Hà Trung - Xã Hà Ninh"><i class="dots"></i></div>
                        <label for="f2">Tên mảnh trích đo:</label><div class="field mark m2"><input id="f2" value="Đường trục trung tâm nối Quốc Lộ 217 và đường"></div>
                        <label for="f3">Tiêu đề khung:</label><div class="field"><input id="f3" value="HỆ TOẠ ĐỘ ..., KHƯ VỰC ... THÔN ...."></div>
                        <label for="f4">Đơn vị đo đạc:</label><div class="field mark m4"><input id="f4" class="scrolled" value="y TNHH Tư vấn Xây dựng và Trắc địa Bản đồ THC"></div>
                        <label for="f5">Đơn vị kiểm tra</label><div class="field"><input id="f5"></div>
                        <label for="f6">Đối tượng đo vẽ</label><div class="field"><input id="f6" value="Trường cao đẳng nghề"></div>
                    </div>
                    <div class="fields lower">
                        <label for="f7">Tỷ lệ bản đồ:<span>1/</span></label><div class="pick"><select id="f7"><option>1000</option></select></div>
                        <label for="f8">Khổ giấy:</label><div class="two"><div class="pick size"><select id="f8"><option>A0</option></select></div><div class="pick"><select aria-label="Hướng giấy"><option>Ngang</option></select></div></div>
                        <label for="f9">Level vẽ khung:</label><div class="pick mark m9"><select id="f9"><option>Level 63</option></select></div>
                        <label for="f10">Loại khung trích đo:</label><div class="pick mark m10"><select id="f10"><option>Khung mảnh trích đo địa chính</option></select></div>
                    </div>
                    <div class="tick"><input type="checkbox" id="tbl"><label for="tbl">Vẽ bảng toạ độ thửa đất</label></div>
                </div>
                <fieldset class="panel corner">
                    <legend>Toạ độ góc khung</legend>
                    <div class="pt"><label for="nw">Tây Bắc:</label><div class="field mark"><input id="nw" value="589080.0026; 2212723.4048"><i class="dots"></i></div></div>
                    <div class="pt"><label for="se">Đông Nam:</label><div class="field mark"><input id="se" value="590389.2545; 2211795.8023"><i class="dots"></i></div></div>
                </fieldset>
                <div class="actions"><button type="button" class="mark auto">Vẽ khung tự động</button><button type="button">Vẽ khung</button><button type="button">Xoá khung</button><button type="button">Đóng</button></div>
            </form>
        </div>
    </main>

    <div class="contacts">
        <div class="chip"><svg viewBox="0 0 44 44"><path d="M10 22l7 9L34 10" class="tk"/><path d="M10 22l7 9L34 10" class="tk2"/></svg>Phone và Zalo và Viber: 036.3232.739</div>
        <div class="chip web"><svg viewBox="0 0 44 44"><path d="M10 22l7 9L34 10" class="tk"/><path d="M10 22l7 9L34 10" class="tk2"/></svg>datsach.net và datsach.com.vn</div>
        <div class="chip"><svg viewBox="0 0 44 44"><path d="M10 22l7 9L34 10" class="tk"/><path d="M10 22l7 9L34 10" class="tk2"/></svg>youtube.com/@datsachtv</div>
    </div>
</div>
</body>
</html>
```
FILE: styles.css
```css
* {
    box-sizing: border-box;
}
body {
    margin: 0;
    padding: 17px 20px 26px;
    min-height: 100vh;
    background: #cdc157;
    color: #111;
    font-family: "Liberation Sans", sans-serif;
    font-size: 16px;
    overflow-x: hidden;
}
a {
    color: inherit;
    text-decoration: none;
}
button, input, select {
    font: inherit;
    color: inherit;
    border-radius: 0;
    margin: 0;
    padding: 0;
    min-width: 0;
}
svg {
    flex: none;
}
.defs {
    position: absolute;
    width: 0;
    height: 0;
}
.band {
    background: #e4da5f;
    box-shadow: 2px 4px 6px rgba(70, 60, 0, 0.7);
}
.frame {
    position: relative;
    z-index: 1;
    top: 6px;
    margin: 0 2px 0 -3px;
    padding: 13px 13px 14px 14px;
    background: #fff;
    border-right: 1px solid #999;
    border-bottom: 2px solid #999;
    box-shadow: 1px 3px 6px rgba(60, 50, 0, 0.7);
}
.screen {
    position: relative;
    overflow: hidden;
    background: #f0f0f0;
}

/* stroke helpers for the icons */
.k { stroke: #222; fill: none; }
.b { stroke: #2a78f0; fill: none; stroke-width: 1.5px; }
.b[fill] { fill: #e4f2ff; }
.s { fill: #f6f8ff; filter: drop-shadow(1px 1px 0 #aab); }
.n { stroke: #5a4420; fill: none; stroke-width: 1.5px; }
.r { stroke: #d81010; fill: none; }
.y { stroke: #998c20; stroke-width: 2px; stroke-dasharray: 2 2; }
.cb { color: #1a6cf0; }
.fb { fill: #2a78e0; }
.q { fill: #b010b8; font: bold 19px "Liberation Serif", serif; }
.q.big { font-size: 27px; }
.faded { filter: grayscale(1); }
.infoi { fill: #1048e0; font: italic bold 24px "Liberation Serif", serif; }
.infow { fill: #fff; font: italic bold 19px "Liberation Serif", serif; }

.ic {
    width: 30px;
    height: 30px;
    margin: 0 5px;
}
.caret {
    flex: none;
    width: 12px;
    height: 7px;
    margin: 0 5px;
    background: #000;
    clip-path: polygon(0 0, 100% 0, 50% 100%);
}
.caret.dim { background: #666; }
.grip {
    flex: none;
    width: 3px;
    height: 27px;
    background: repeating-linear-gradient(#999 0 3px, transparent 3px 6px);
}
.sep {
    flex: none;
    width: 2px;
    align-self: stretch;
    margin: 4px 5px;
    background: #aaa;
}
.min {
    width: 15px;
    height: 2px;
    background: #444;
}
.max {
    width: 14px;
    height: 14px;
    border: 1px solid #ddd;
}

.titlebar {
    display: flex;
    align-items: flex-end;
    height: 21px;
    background: #fff;
    overflow: hidden;
    font: 17px/22px "Open Sans", sans-serif;
}
.titlebar > svg { margin-bottom: 6px; }
.titlebar span { margin: 0 0 5px 7px; white-space: nowrap; }
.titlebar .winbtns {
    display: flex;
    align-items: center;
    gap: 50px;
    margin: 0 45px 9px auto;
}
.menubar {
    display: flex;
    height: 31px;
    padding-left: 3px;
    font-size: 15px;
    line-height: 35px;
}
.menubar a { padding: 0 10px; }

.toolbars {
    display: flex;
    gap: 5px;
    height: 47px;
}
.group {
    display: flex;
    align-items: center;
    background: linear-gradient(#fdfdfd, #ececec 50%, #d2d2d2);
    border-right: 1px solid #ccc;
    border-bottom: 1px solid #bbb;
    border-radius: 0 4px 5px 0;
}
.files { width: 168px; padding-left: 1px; }
.attrs { padding-left: 2px; width: 799px; }
.attrs .grip { margin-right: 6px; }
.attrs > .caret { margin-left: 11px; }
.attrs b { width: 28px; text-align: center; font-weight: normal; }
.cell {
    display: flex;
    align-items: center;
    width: 104px;
    flex: none;
    height: 38px;
    border-left: 2px solid #aaa;
    padding-left: 4px;
    margin-right: -1px;
}
.cell .caret { margin-left: 9px; }
.cell.first { width: 200px; margin-left: 3px; }
.swatch {
    width: 27px;
    height: 26px;
    margin: 0 7px 0 6px;
    background: #fff;
    border: 2px solid #222;
}
.prim { padding: 0 0 0 2px; }
.prim .grip { margin-right: 2px; }
.prim .ic { margin-left: 6px; }
.keyin { width: 324px; padding-left: 5px; }
.keyin input {
    width: 168px;
    height: 27px;
    border: 2px solid #bbb;
    background: #fff;
}
.drop {
    width: 25px;
    height: 27px;
    margin: 0 13px 0 3px;
    border: 1px solid #aaa;
    background: #e4e4e4;
}
.keyin .ic { margin-right: 8px; }

.pick {
    position: relative;
    display: flex;
    flex: 1;
    height: 27px;
    border: 2px solid #b4cdec;
    background: #fff;
}
.pick select {
    flex: 1;
    appearance: none;
    border: none;
    background: transparent;
    padding-left: 2px;
    outline: none;
}
.pick::before {
    content: "";
    position: absolute;
    right: 5px;
    top: 10px;
    width: 9px;
    height: 5px;
    background: #4a7ab8;
    clip-path: polygon(0 0, 100% 0, 50% 100%);
}
.pick.grey {
    border: 2px solid #adadad;
    background: #e1e1e1;
}
.pick.grey::before {
    right: 7px;
    width: 12px;
    height: 7px;
    top: 9px;
    background: #000;
}
.attrs .pick { flex: none; width: 188px; }

.work {
    display: flex;
    height: 767px;
    border-bottom: 2px solid #aaa;
}
.tasks {
    flex: none;
    width: 354px;
    border-right: 2px solid #d8d8e0;
}
.taskhead {
    display: flex;
    align-items: center;
    gap: 9px;
    height: 29px;
    padding-right: 4px;
    background: linear-gradient(#bccde0, #e8f4ff);
    font-family: "Open Sans", sans-serif;
}
.taskhead span {
    flex: 1;
    overflow: hidden;
    text-indent: -6px;
}
.taskhead .caret { margin: 0; }
.taskpick {
    position: relative;
    display: flex;
    align-items: center;
    height: 35px;
    margin: 6px 5px 7px 0;
    padding-left: 4px;
    background: #fff;
    border: 2px solid #777;
    border-left: none;
    border-radius: 0 6px 0 0;
    font-family: "DejaVu Sans", sans-serif;
}
.taskpick select {
    flex: 1;
    height: 31px;
    appearance: none;
    border: none;
    border-right: 2px solid #888;
    background: none;
    padding-left: 8px;
}
.taskpick .caret { margin: 0 10px; }
.mainbox {
    display: flex;
    flex-wrap: wrap;
    align-content: flex-start;
    height: 88px;
    margin: 0 4px 5px 0;
    padding: 3px 0 0 2px;
    background: #fff;
    border: 1px solid #d8f0fa;
    border-left: none;
    border-radius: 0 6px 6px 0;
}
.mainbox button {
    position: relative;
    width: 41px;
    height: 39px;
    padding: 0;
    border: none;
    background: none;
}
.mainbox svg {
    position: absolute;
    left: 0;
    top: 5px;
    width: 34px;
    height: 32px;
}
.mainbox kbd {
    position: absolute;
    left: 0;
    bottom: 0;
    width: 18px;
    height: 18px;
    background: linear-gradient(90deg, #c8e0ff, #8cbcf8);
    border-right: 1px solid #2a6ce0;
    border-bottom: 2px solid #2a6ce0;
    font: 16px/17px "Liberation Sans", sans-serif;
}
.mainbox .more::after {
    content: "";
    position: absolute;
    right: 0;
    bottom: 0;
    width: 5px;
    height: 8px;
    background: #000;
    clip-path: polygon(0 0, 100% 50%, 0 100%);
}
.mainbox .on {
    background: #ffd090;
    box-shadow: inset 0 0 0 2px #4a7cc0;
}
.scroller {
    display: flex;
    gap: 4px;
    height: 591px;
    font-family: "DejaVu Sans", sans-serif;
}
.list {
    width: 322px;
    overflow: hidden;
    background: #fff;
}
.sec {
    display: flex;
    align-items: center;
    height: 33px;
    padding-right: 12px;
}
.sec span { flex: 1; padding-left: 11px; }
.closed {
    background: linear-gradient(#e8e8e8, #c8c8c8);
    border: 2px solid #aaa;
    border-left: none;
    border-radius: 0 8px 8px 0;
    box-shadow: 0 6px 0 #f0f0f0;
}
.open {
    height: 30px;
    margin: 6px 0 6px;
    background: linear-gradient(#e8f8ff, #b0e0fa);
    font-weight: bold;
    border-radius: 0 6px 0 0;
}
.row {
    display: flex;
    margin: 0 9px 0 2px;
}
.row kbd {
    display: flex;
    align-items: center;
    justify-content: center;
    width: 22px;
    background: linear-gradient(90deg, #b8d6ff, #84b2f8);
    font: 17px "Liberation Sans", sans-serif;
}
.icons {
    flex: 1;
    display: grid;
    grid-template-columns: repeat(7, 41px);
    grid-auto-rows: 39px;
    align-items: center;
    justify-items: center;
    border-bottom: 2px solid #aaa;
}
.icons > svg {
    width: 32px;
    height: 32px;
    overflow: visible;
}
.serif text {
    fill: #a81414;
    font-family: "Liberation Serif", serif;
    font-weight: bold;
}
.serif .fb { fill: #2a78e0; }
.serif .q { fill: #b010b8; }
.cut { height: 34px; overflow: hidden; }
.scrollbar {
    width: 23px;
    display: flex;
    flex-direction: column;
    align-items: center;
    background: #f0f0f0;
    padding: 7px 0 12px;
}
.scrollbar i {
    width: 21px;
    height: 438px;
    margin: 5px 0 auto;
    background: #cdcdcd;
}

.view {
    flex: 1;
    min-width: 0;
    display: flex;
    flex-direction: column;
    margin: 0 0 4px 8px;
    padding: 0 0 8px 9px;
    background: #b9d2ec;
    border: 2px solid #555;
    border-right: none;
    border-bottom: 2px solid #167a8c;
    border-radius: 8px 0 0 0;
    box-shadow: -8px 0 0 #b0b0de;
}
.viewtitle {
    display: flex;
    align-items: center;
    gap: 7px;
    height: 41px;
    margin-left: -9px;
    padding: 9px 0 0 12px;
    background: linear-gradient(#9cb6d4, #bcd4ee);
    border-radius: 8px 0 0 0;
    font: 17px "Open Sans", sans-serif;
}
.viewtools {
    display: flex;
    align-items: center;
    height: 34px;
    padding: 0 0 2px 1px;
    background: #f2f2f2;
}
.viewtools svg { width: 24px; height: 22px; margin: 0 4px; }
.viewtools .spill { overflow: visible; }
.viewtools .caret.wide { margin: 0 5px; }
.viewtools .sep { margin: 2px 2px; }
.fit {
    width: 32px;
    height: 30px;
    border: 2px solid #3f74c0;
    background: linear-gradient(#ffd090, #fff0a0);
}
.viewtools .fit svg { margin: 2px; display: block; }
.canvas {
    position: relative;
    flex: 1;
    overflow: hidden;
    background: #243331;
}
.map { position: absolute; left: 0; top: 0; }
.parcel path { fill: none; vector-effect: non-scaling-stroke; }
.parcel .w { stroke: #eee; }
.parcel .rd { stroke: #e01010; }
.parcel .rh { stroke: #d01818; stroke-width: 3px; stroke-dasharray: 1 2; }
.parcel .dash { stroke: #f00; stroke-width: 3px; stroke-dasharray: 9 5; }
.parcel .gr { stroke: #10d020; stroke-width: 1.5px; }
.parcel .blob { stroke: #fff; stroke-width: 2px; }
.area { fill: #fff; font: 44px "Liberation Sans", sans-serif; }

.win {
    position: absolute;
    background: #f0f0f0;
    box-shadow: 0 2px 14px rgba(0, 0, 0, 0.45);
}
.wintitle {
    display: flex;
    align-items: center;
    background: #fff;
    color: #999;
    font: 17px "Open Sans", sans-serif;
}
.wintitle .min { background: #999; }
.fitwin {
    left: 143px;
    top: 49px;
    width: 291px;
    height: 85px;
}
.fitwin .wintitle { height: 35px; padding-left: 7px; font-size: 16px; }
.fitwin span { width: 92px; padding-left: 11px; }
.fitwin .max { margin: 0 53px 0 51px; }
.fitbody {
    display: flex;
    align-items: center;
    gap: 9px;
    padding: 8px 52px 0 45px;
}
.fitbody .pick { height: 21px; }
.fitbody .pick.grey::before { top: 5px; }

.gcadas {
    left: 836px;
    right: 0;
    top: 107px;
    border: 1px solid #888;
    border-right: none;
    overflow: hidden;
    box-shadow: -3px 2px 12px rgba(0, 0, 0, 0.35);
}
.gcadas .wintitle { height: 41px; padding: 0 48px 0 11px; }
.gcadas .wintitle span { flex: 1; padding-left: 8px; }
.gcadas .max { margin-left: 50px; border-color: #ddd; }
.gmenu {
    display: flex;
    height: 34px;
    padding: 3px 0 3px 1px;
    background: #c0dcff;
    line-height: 28px;
    font-family: "Noto Sans", sans-serif;
    white-space: nowrap;
}
.gmenu a { padding: 0 12px; }
.gmenu .hot {
    background: linear-gradient(#fff0b8, #ffdc78);
    box-shadow: inset 0 0 0 1px #f8b860;
}
.gbody { height: 67px; background: #e4f0ff; }
.gicons {
    display: flex;
    align-items: center;
    gap: 22px;
    height: 35px;
    padding-left: 14px;
    background: #c0dcff;
}
.gicons svg { width: 24px; height: 22px; }
.gicons .sep { margin: 6px -6px; background: #a0b8d8; }

.mark { position: relative; }
.mark::after {
    content: "";
    position: absolute;
    inset: -5px -6px;
    border: 4px solid #ed1c24;
    pointer-events: none;
}
.gmenu .mark::after { inset: -5px 0 -4px; }
.m1::after { right: 11px; }
.m4::after { inset: -5px -2px; }
.m9::after { right: auto; width: 108px; }
.m10::after { inset: -2px auto; left: -2px; width: 228px; }

.dialog {
    left: 1209px;
    top: 220px;
    width: 547px;
    padding-bottom: 13px;
    background: #e4f0ff;
    border: 2px solid #2a8ae0;
    font: 15px "Noto Sans", sans-serif;
}
.dlgtitle {
    display: flex;
    align-items: center;
    justify-content: space-between;
    height: 41px;
    padding: 0 13px 3px 11px;
    background: #fff;
    font: 17px "Open Sans", sans-serif;
}
.panel {
    margin: 12px 12px 0 11px;
    padding: 9px 13px 15px 9px;
    border: 2px solid #88aee0;
}
.fields {
    display: grid;
    grid-template-columns: 140px 1fr;
    grid-auto-rows: 27px;
    gap: 9px 2px;
    align-items: center;
    white-space: nowrap;
}
.lower { row-gap: 10px; margin-top: 14px; }
.lower label { display: flex; justify-content: space-between; }
.field {
    position: relative;
    display: flex;
    height: 27px;
    border: 2px solid #b4cdec;
    background: #fff;
}
.field input {
    flex: 1;
    width: 0;
    padding: 0 2px;
    border: none;
    outline: none;
    background: none;
}
.field .scrolled { text-indent: -4px; }
.dots {
    position: absolute;
    right: 3px;
    top: 10px;
    width: 15px;
    height: 3px;
    background: repeating-linear-gradient(90deg, #4a7ab8 0 3px, transparent 3px 6px);
}
.two { display: flex; gap: 9px; }
.size { flex: 0 0 103px; }
.tick {
    display: flex;
    align-items: center;
    gap: 7px;
    margin: 12px 0 0 144px;
}
.tick input {
    appearance: none;
    width: 16px;
    height: 16px;
    background: linear-gradient(135deg, #d0d0d0, #fff);
    border: 2px solid #e8f0fa;
    box-shadow: 0 0 0 1px #a8c4e8;
}
.corner {
    margin-top: 8px;
    padding: 0 0 12px;
}
.corner legend {
    float: left;
    width: 100%;
    height: 26px;
    padding: 2px 0 0 15px;
    background: linear-gradient(#e4f0ff, #b8d8ff);
    border-bottom: 2px solid #88aee0;
    color: #1a3a9a;
}
.pt {
    clear: both;
    display: flex;
    align-items: center;
    padding: 10px 10px 0 9px;
}
.pt label { width: 83px; }
.pt .field { flex: 1; background: #e4f0ff; }
.pt .dots { right: 7px; }
.pt .mark::after { inset: -4px; }
.actions {
    display: flex;
    gap: 9px;
    padding: 8px 12px 0 11px;
}
.actions button {
    flex: 1;
    height: 31px;
    border: 2px solid #90acd4;
    border-radius: 3px;
    background: linear-gradient(#f0f6ff 45%, #d8e8fa 50%, #e8f2ff);
}
.actions .auto { flex: 0 0 164px; }
.auto::after { inset: -6px -4px -3px -6px; }

.nav { width: 601px; padding-left: 1px; }
.nav .caret + .pick { margin-left: 3px; }
.nav .models { flex: 0 0 187px; align-items: center; }
.models select { padding-left: 8px; }
.nav .sep { margin-right: 4px; }
.views { display: flex; flex: 1; }
.views button {
    flex: 1;
    height: 27px;
    border: 2px solid #fff;
    border-right-color: #444;
    border-bottom-color: #777;
    background: #e4e4e4;
}
.views .on { background: linear-gradient(#ffc888, #fff4a0); border-color: #888; }
.coords { width: 531px; padding-left: 2px; }
.coords label {
    width: 50px;
    padding-right: 9px;
    text-align: right;
    font-size: 22px;
    font-weight: bold;
}
.coords .short { width: 42px; }
.coords input {
    width: 200px;
    height: 24px;
    padding-left: 5px;
    border: 2px solid #bbb;
    background: #fff;
    color: #888;
}
.coords .sep { margin: 0 -2px 0 10px; }
.bottom { height: 49px; border-bottom: 2px solid #b0b0b0; }

.status {
    display: flex;
    align-items: center;
    height: 26px;
    font-size: 15px;
    line-height: 28px;
    white-space: nowrap;
}
.status .ready {
    width: 564px;
    overflow: hidden;
    text-indent: -6px;
    padding-top: 4px;
}
.msg {
    display: flex;
    flex: 1;
    align-self: stretch;
    margin-left: 5px;
    padding-top: 3px;
    border-left: 2px solid #aaa;
    font-size: 16px;
}
.msg i {
    width: 8px;
    height: 5px;
    margin: 2px 4px 0 28px;
    background: #000;
    clip-path: polygon(50% 0, 100% 100%, 0 100%);
}
.st {
    display: flex;
    align-items: center;
    justify-content: center;
    width: 38px;
    height: 24px;
    margin-left: 3px;
    border-left: 2px solid #aaa;
    border-top: 2px solid #aaa;
}
.st.level { width: 166px; justify-content: flex-start; padding: 4px 0 0 1px; font-size: 16px; }
.st.long { width: 150px; }
.st.last { width: 32px; }

.contacts {
    display: flex;
    justify-content: space-between;
    height: 61px;
    padding: 3px 10px 0 0;
}
.chip {
    display: flex;
    align-items: center;
    gap: 11px;
    height: 66px;
    padding: 0 25px 0 21px;
    border: 1px solid #ffc000;
    border-radius: 12px;
    background: linear-gradient(#ffdc9c, #ffd070);
    color: #000;
    font: 33px "Open Sans", sans-serif;
    text-shadow: 1px 2px 3px rgba(0, 0, 0, 0.4);
    white-space: nowrap;
}
.web { margin-right: 40px; }
.chip svg {
    width: 44px;
    height: 44px;
    background: #5b9bd5;
    border: 2px solid #fff;
    box-shadow: 1px 1px 0 #9cc4ec;
}
.tk { fill: none; stroke: #fff; stroke-width: 7px; }
.tk2 { fill: none; stroke: #a8c8e8; stroke-width: 2px; }
```
